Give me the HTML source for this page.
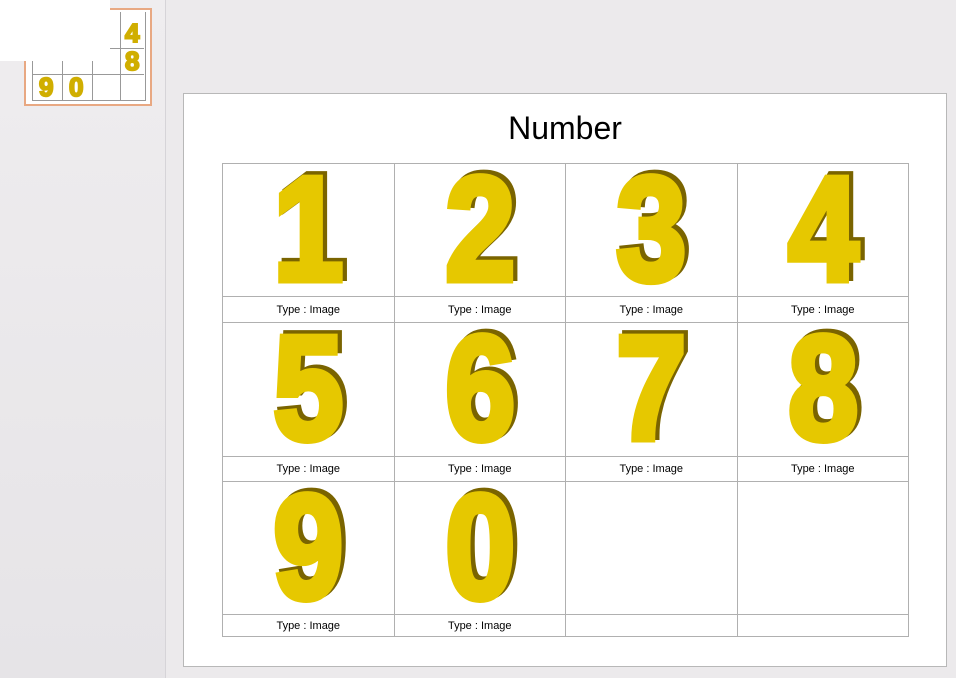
<!DOCTYPE html>
<html><head><style>
html,body{margin:0;padding:0;width:956px;height:678px;overflow:hidden;background:#eceaec;font-family:"Liberation Sans",sans-serif;position:relative}
.left{position:absolute;left:0;top:0;width:165px;height:678px;background:linear-gradient(#efedef,#e6e4e7);border-right:1px solid #d6d4d8}
.thumb{position:absolute;left:24px;top:8px;width:124px;height:94px;border:2px solid #e8a882;background:#fff}
.cover{position:absolute;left:0;top:0;width:110px;height:61px;background:#fff}
.slide{position:absolute;left:183px;top:93px;width:762px;height:572px;background:#fff;border:1px solid #b8b8b8}
.title{position:absolute;left:183px;top:110px;width:764px;text-align:center;font-size:32px;color:#000}
table{position:absolute;left:222px;top:163px;border-collapse:collapse}
td{border:1px solid #b0b0b0;padding:0;width:170.5px;text-align:center;vertical-align:middle;font-size:11px;color:#000}
.img{height:132px;position:relative;overflow:hidden}
.cap1{height:25px}
.cap3{height:21px}
.d{position:absolute;left:0;right:0;top:-8px;font-weight:bold;font-size:148px;line-height:1;transform:scaleX(0.85)}
.d .b{position:absolute;left:9px;right:0;top:-3px;color:#7a6400;text-align:center;-webkit-text-stroke:8px #7a6400}
.d .f{position:relative;display:block;text-align:center;color:#e6c800;-webkit-text-stroke:7px #e6c800}
.tc{position:absolute;font-weight:bold;font-size:26px;color:#d0ae00;-webkit-text-stroke:2px #d0ae00}
</style></head><body>
<div class="left">
 <div class="thumb">
  <div style="position:absolute;left:66px;top:2px;width:0;height:88px;border-left:1px solid #999"></div>
  <div style="position:absolute;left:94px;top:2px;width:0;height:88px;border-left:1px solid #999"></div>
  <div style="position:absolute;left:6px;top:2px;width:112px;height:88px;border:1px solid #999;border-top:none"></div>
  <div style="position:absolute;left:6px;top:38px;width:112px;border-top:1px solid #999"></div>
  <div style="position:absolute;left:6px;top:64px;width:112px;border-top:1px solid #999"></div>
  <div style="position:absolute;left:36px;top:38px;height:52px;border-left:1px solid #999"></div>
  <span class="tc" style="left:99px;top:8px">4</span>
  <span class="tc" style="left:99px;top:36px">8</span>
  <span class="tc" style="left:13px;top:62px">9</span>
  <span class="tc" style="left:43px;top:62px">0</span>
 </div>
</div>
<div class="cover"></div>
<div class="slide"></div>
<div class="title">Number</div>
<table>
<tr><td class="img"><div class="d"><span class="b">1</span><span class="f">1</span></div></td><td class="img"><div class="d"><span class="b">2</span><span class="f">2</span></div></td><td class="img"><div class="d"><span class="b">3</span><span class="f">3</span></div></td><td class="img"><div class="d"><span class="b">4</span><span class="f">4</span></div></td></tr>
<tr><td class="cap1">Type : Image</td><td class="cap1">Type : Image</td><td class="cap1">Type : Image</td><td class="cap1">Type : Image</td></tr>
<tr><td class="img" style="height:133px"><div class="d"><span class="b">5</span><span class="f">5</span></div></td><td class="img"><div class="d"><span class="b">6</span><span class="f">6</span></div></td><td class="img"><div class="d"><span class="b">7</span><span class="f">7</span></div></td><td class="img"><div class="d"><span class="b">8</span><span class="f">8</span></div></td></tr>
<tr><td class="cap1" style="height:24px">Type : Image</td><td class="cap1" style="height:24px">Type : Image</td><td class="cap1" style="height:24px">Type : Image</td><td class="cap1" style="height:24px">Type : Image</td></tr>
<tr><td class="img"><div class="d"><span class="b">9</span><span class="f">9</span></div></td><td class="img"><div class="d"><span class="b">0</span><span class="f">0</span></div></td><td class="img"></td><td class="img"></td></tr>
<tr><td class="cap3">Type : Image</td><td class="cap3">Type : Image</td><td class="cap3"></td><td class="cap3"></td></tr>
</table>
</body></html>
